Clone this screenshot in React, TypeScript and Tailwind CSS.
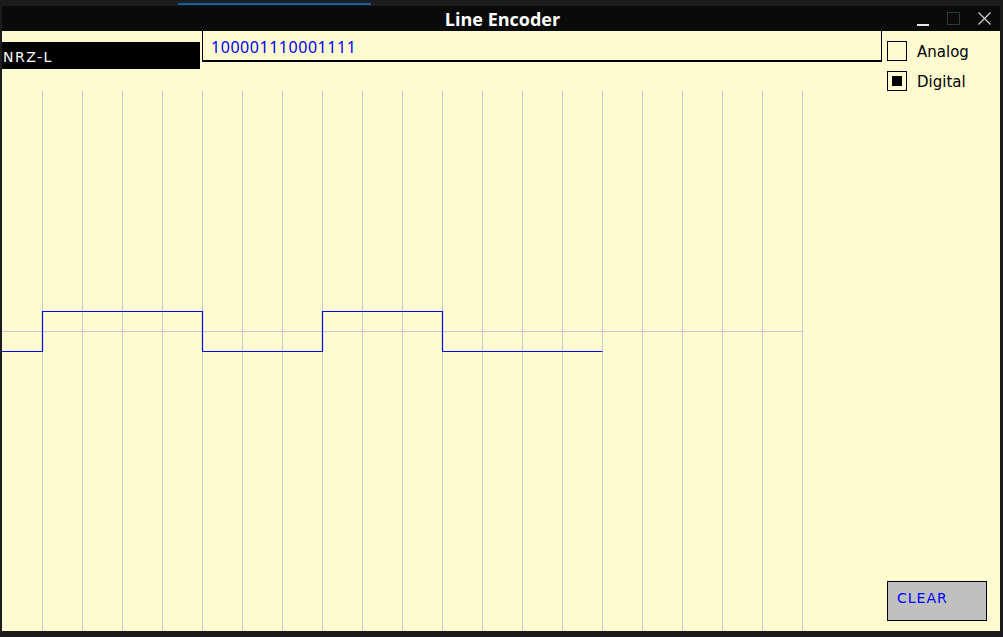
const bits = '100001110001111'

function Waveform() {
  // NRZ-L: a 1 sits low, a 0 sits high
  const cell = 40
  const hi = 220.5
  const lo = 260.5
  let d = ''
  bits.split('').forEach((b, i) => {
    const y = b === '1' ? lo : hi
    const x0 = i === 0 ? 0 : i * cell + 0.5
    d += i === 0 ? `M${x0},${y}` : ` L${x0},${y}`
    d += ` L${(i + 1) * cell + 0.5},${y}`
  })
  const cols = Array.from({ length: 20 }, (_, i) => (i + 1) * cell + 0.5)
  return (
    <svg width="802" height="540" className="block">
      {cols.map((x) => (
        <line key={x} x1={x} y1={0} x2={x} y2={540} stroke="#c6c6d2" strokeWidth="1" />
      ))}
      <line x1={0} y1={240.5} x2={800} y2={240.5} stroke="#c6c6d2" strokeWidth="1" />
      <path d={d} fill="none" stroke="#0000ff" strokeWidth="1.2" />
    </svg>
  )
}

export default function App() {
  return (
    <div className="w-[1003px] h-[637px] bg-[#1c1c1c] flex flex-col overflow-hidden">
      {/* desktop strip */}
      <div className="h-[6px] flex items-end">
        <div className="ml-[178px] w-[193px] h-[2px] mb-[1px] bg-[#0f5fa8]" />
      </div>

      {/* title bar */}
      <div className="h-[25px] ml-[2px] mr-[3px] bg-[#0a0a0a] relative flex items-center justify-center">
        <span className="text-white font-bold text-[18px] leading-none font-['Open_Sans',sans-serif] ml-[3px]">
          Line Encoder
        </span>
        <div className="absolute right-[9px] top-0 h-full flex items-center gap-[18px]">
          <div className="w-[12px] h-[12px] flex items-end">
            <div className="w-[12px] h-[1.5px] bg-[#e8e8e8] -mb-[1px]" />
          </div>
          <div className="w-[13px] h-[13px] border border-[#2c3a33]" />
          <svg width="13" height="13" viewBox="0 0 13 13">
            <path d="M0.5 0.5 L12.5 12.5 M12.5 0.5 L0.5 12.5" stroke="#d8d8d8" strokeWidth="1.1" />
          </svg>
        </div>
      </div>

      {/* window body */}
      <div className="h-[600px] ml-[2px] mr-[3px] bg-[#fffbd1] flex">
        <div className="w-[880px] flex flex-col">
          <div className="h-[60px] flex items-start">
            <div className="mt-[11px] w-[198px] h-[27px] bg-black text-white text-[14px] leading-none tracking-[1.5px] font-['DejaVu_Sans',sans-serif] flex items-end pb-[5px] pl-[1px]">
              NRZ-L
            </div>
            <div className="ml-[2px] w-[680px] h-[31px] border-l border-r border-b-2 border-black pl-[8px] pt-[8px] text-[16px] leading-none text-[#0000ff] font-['Noto_Sans',sans-serif] flex">
              {bits.split('').map((c, i) => (
                <span key={i} className="w-[9.7px] inline-block">{c}</span>
              ))}
            </div>
          </div>
          <Waveform />
        </div>

        <div className="flex-1 flex flex-col pl-[5px]">
          <div className="mt-[10px] flex items-center gap-[10px] h-[20px]">
            <div className="w-[20px] h-[20px] border border-black" />
            <span className="text-[15px] leading-none text-black font-['DejaVu_Sans',sans-serif] mt-[3px]">Analog</span>
          </div>
          <div className="mt-[10px] flex items-center gap-[10px] h-[20px]">
            <div className="w-[20px] h-[20px] border border-black flex items-center justify-center">
              <div className="w-[10px] h-[10px] bg-black" />
            </div>
            <span className="text-[15px] leading-none text-black font-['DejaVu_Sans',sans-serif] mt-[3px]">Digital</span>
          </div>
          <button className="mt-auto mb-[10px] w-[100px] h-[40px] bg-[#c0c0c0] border border-black text-left pl-[9px] pb-[6px] text-[14px] leading-none tracking-[1px] text-[#0000ff] font-['DejaVu_Sans',sans-serif]">
            CLEAR
          </button>
        </div>
      </div>

      <div className="flex-1" />
    </div>
  )
}
